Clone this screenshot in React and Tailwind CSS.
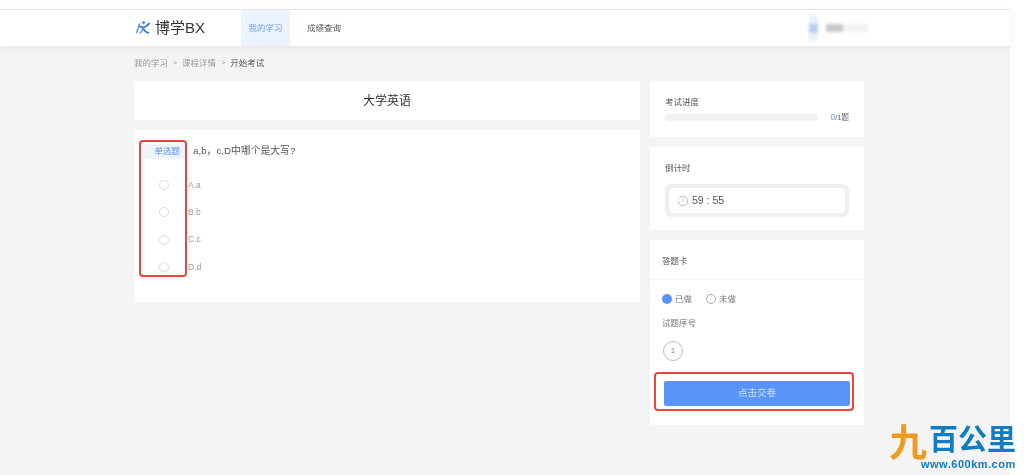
import { useState } from "react";

const font = { fontFamily: '"Liberation Sans", "Noto Sans CJK SC", sans-serif' };

const options = ["A.a", "B.b", "C.c", "D.d"];

function Logo() {
  return (
    <svg width="14" height="16" viewBox="0 0 14 16" fill="none" className="mr-[5px]">
      <path d="M3.4 4 L0.8 12.5" stroke="#5b95f0" strokeWidth="1.5" strokeLinecap="round" />
      <path d="M4 6.5 C7 8 10 7.5 13 3.5" stroke="#2f6fd8" strokeWidth="1.7" strokeLinecap="round" />
      <path d="M7 8 C8 10.5 9.5 12 12.5 13" stroke="#2f6fd8" strokeWidth="1.7" strokeLinecap="round" />
      <path d="M7 8 C6.5 10 5.5 12 4 13" stroke="#5b95f0" strokeWidth="1.5" strokeLinecap="round" />
      <circle cx="7.5" cy="2.6" r="1.6" fill="#5b95f0" />
    </svg>
  );
}

function TopBar() {
  return (
    <header className="h-[37px] bg-white shadow-[0_2px_8px_rgba(0,0,0,0.06)] border-t border-[#e6e6e6] relative">
      <div className="flex h-full pl-[136px] items-center">
        <Logo />
        <span className="text-[15px] text-[#333] w-[86px] shrink-0">博学BX</span>
        <div className="h-full w-[49px] bg-[#ebf3fe] text-[#6f9fe8] text-[8.5px] flex items-center justify-center">
          我的学习
        </div>
        <div className="ml-[17px] text-[8.5px] text-[#555]">成绩查询</div>
        <div className="ml-auto mr-[142px] flex items-center blur-[1.5px]">
          <div className="w-[9px] h-[26px] bg-[#e9f1fd] flex items-center">
            <div className="w-[9px] h-[9px] bg-[#b4cff5]" />
          </div>
          <div className="ml-2 w-[17px] h-[8px] bg-[#c9c9c9]" />
          <div className="w-[25px] h-[8px] bg-[#f3f3f3]" />
        </div>
      </div>
    </header>
  );
}

function QuestionPanel() {
  return (
    <div className="w-[506px]">
      <div className="h-[39px] bg-white flex items-center justify-center text-[12px] text-[#333]">大学英语</div>
      <div className="mt-[10px] h-[172px] bg-white relative pl-[10px] pt-[14px]">
        <div className="flex items-center">
          <div className="w-[42px] h-[15px] bg-[#eef4fe] rounded-[3px] text-[#5c8fe0] text-[8.5px] flex items-center justify-end pr-[6px]">
            单选题
          </div>
          <div className="ml-[7px] text-[9.8px] text-[#555]">a,b，c,D中哪个是大写?</div>
        </div>
        <div className="mt-[21px] flex flex-col gap-[17.3px]">
          {options.map((o) => (
            <div key={o} className="flex items-center h-[10px]">
              <div className="ml-[15px] w-[10px] h-[10px] rounded-full border border-[#dcdcdc] bg-white" />
              <div className="ml-[19px] text-[8.5px] text-[#999]">{o}</div>
            </div>
          ))}
        </div>
        {/* annotation box */}
        <div className="absolute left-[5px] top-[10px] w-[48px] h-[137px] rounded-[4px] border-2 border-[#f0433a]" />
      </div>
    </div>
  );
}

function SidePanel() {
  const [done] = useState(0);
  return (
    <div className="w-[214px] ml-[10px] flex flex-col">
      <div className="h-[56px] bg-white px-[15px] pt-[16px]">
        <div className="text-[8.5px] leading-[11px] text-[#555]">考试进度</div>
        <div className="flex items-center mt-[3px]">
          <div className="w-[153px] h-[7px] rounded-full bg-[#f1f1f1]" />
          <div className="ml-auto text-[7.5px] text-[#666]">
            <span className="text-[#6f9fe8] text-[8.5px]">{done}</span>/1题
          </div>
        </div>
      </div>
      <div className="mt-[10px] h-[83px] bg-white px-[15px] pt-[16px]">
        <div className="text-[8.5px] leading-[11px] text-[#555]">倒计时</div>
        <div className="mt-[10px] h-[33px] rounded-[6px] bg-[#efefef] p-[4px]">
          <div className="h-[25px] rounded-[5px] bg-white flex items-center pl-[8px] text-[10.5px] text-[#555]">
            <svg width="12" height="12" viewBox="0 0 12 12" fill="none" className="mr-[3px]">
              <path d="M2.2 3.4 A4.6 4.6 0 1 1 1.4 6" stroke="#aaa" strokeWidth="0.8" />
              <path d="M6 3.6 V6 L4.8 7.4" stroke="#bbb" strokeWidth="0.7" />
            </svg>
            59 : 55
          </div>
        </div>
      </div>
      <div className="mt-[10px] h-[185px] bg-white relative">
        <div className="h-[40px] border-b border-[#f1f1f1] pl-[12px] pt-[3px] flex items-center text-[8.5px] text-[#555]">答题卡</div>
        <div className="flex items-center pl-[12px] mt-[13px] text-[8.5px] text-[#777]">
          <div className="w-[10px] h-[10px] rounded-full bg-[#5b93f5]" />
          <span className="ml-[3px]">已做</span>
          <div className="ml-[14px] w-[10px] h-[10px] rounded-full border border-[#aaa]" />
          <span className="ml-[3px]">未做</span>
        </div>
        <div className="pl-[12px] mt-[12px] text-[8.5px] leading-[11px] text-[#777]">试题序号</div>
        <div className="ml-[13px] mt-[12px] w-[20px] h-[20px] rounded-full border border-[#bbb] flex items-center justify-center text-[8px] text-[#888]">
          1
        </div>
        <button className="block mx-auto mt-[20px] w-[186px] h-[25px] rounded-[2px] bg-[#5a94fb] text-white/70 text-[9.5px]">
          点击交卷
        </button>
        {/* annotation box */}
        <div className="absolute left-[4px] top-[132px] w-[200px] h-[39px] rounded-[4px] border-2 border-[#f0433a]" />
      </div>
    </div>
  );
}

function Watermark() {
  return (
    <div className="absolute left-[890px] top-[423px] w-[134px] h-[52px]">
      <span className="absolute left-[-1px] top-[-1px] text-[38px] leading-[42px] font-bold text-[#ee9a1e]">九</span>
      <span className="absolute left-[39px] top-[1px] text-[29px] leading-[32px] font-bold text-[#0f7cc4]">百公里</span>
      <span className="absolute left-[31px] top-[35px] text-[11px] leading-[13px] font-bold text-[#0f7cc4] tracking-[0.5px]">www.600km.com</span>
    </div>
  );
}

export default function App() {
  return (
    <div className="w-[1024px] h-[475px] bg-white overflow-hidden relative blur-[0.35px]" style={font}>
      <div className="w-[1010px] h-full flex flex-col bg-[#f4f4f4] border-t-[9px] border-white">
        <TopBar />
        <div className="pl-[134px] mt-[12px] flex items-center h-[11px] text-[8.5px] text-[#999]">
          <span>我的学习</span>
          <span className="mx-[5px] text-[7px]">&gt;</span>
          <span>课程详情</span>
          <span className="mx-[5px] text-[7px]">&gt;</span>
          <span className="text-[#555]">开始考试</span>
        </div>
        <div className="pl-[134px] mt-[12px] flex items-start">
          <QuestionPanel />
          <SidePanel />
        </div>
      </div>
      <Watermark />
    </div>
  );
}
